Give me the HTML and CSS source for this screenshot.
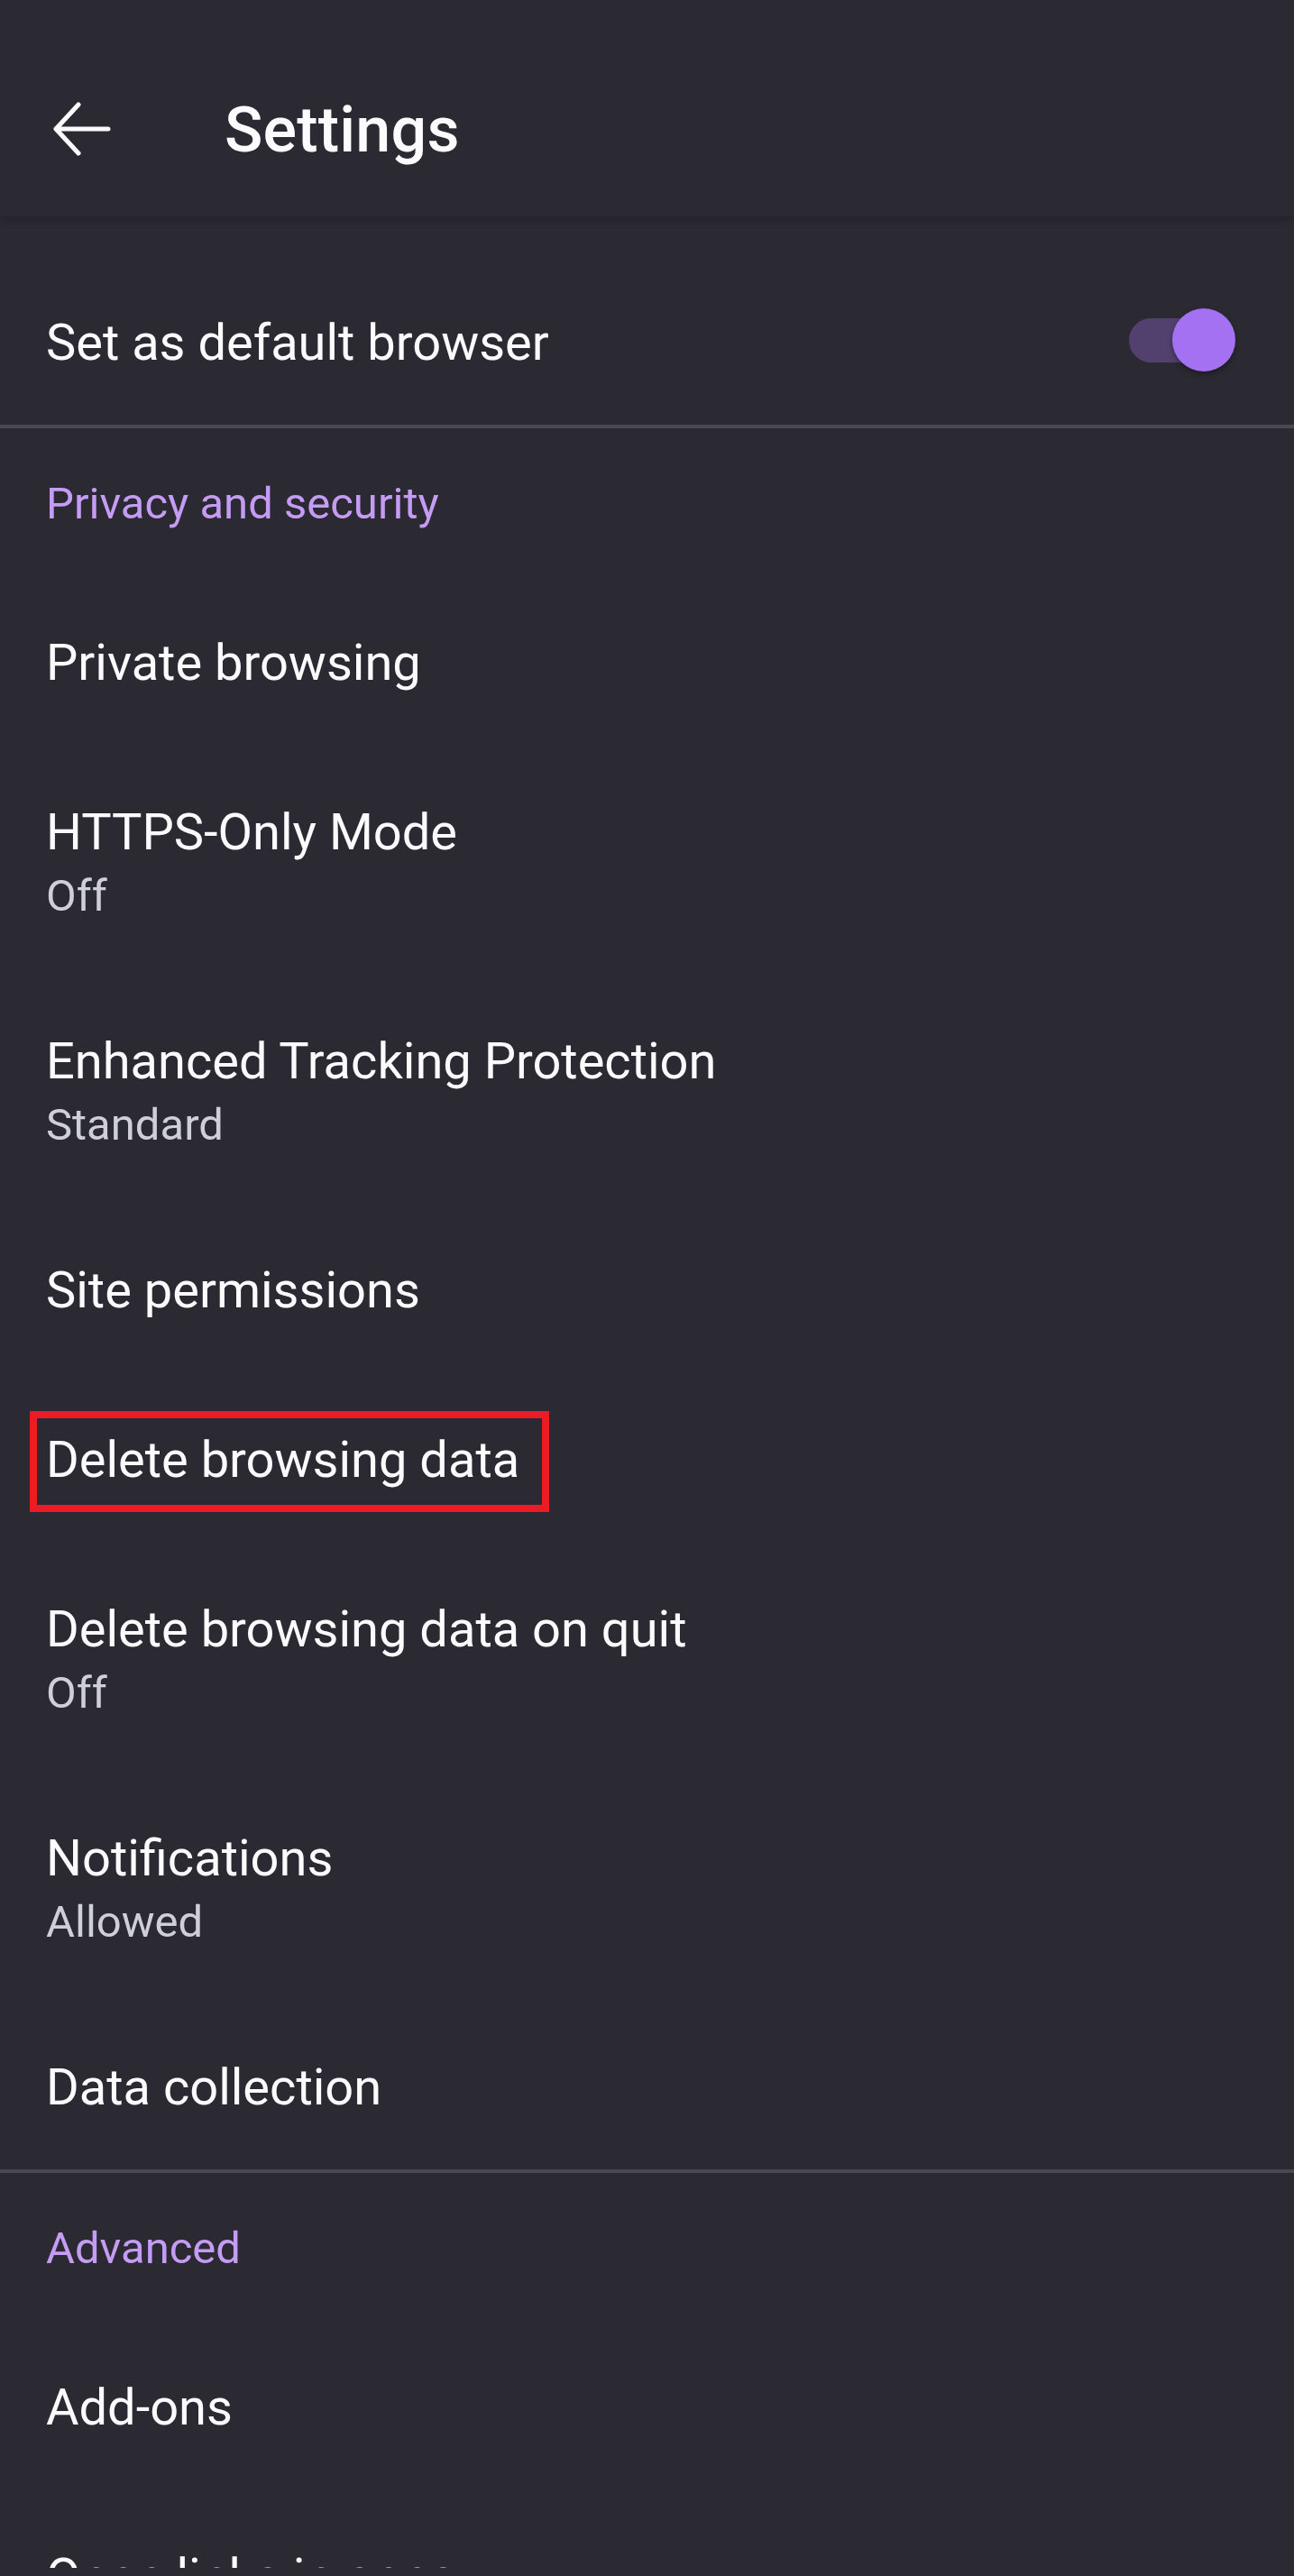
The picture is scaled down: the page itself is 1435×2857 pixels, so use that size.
FILE: index.html
```html
<!DOCTYPE html>
<html lang="en">
<head>
<meta charset="utf-8">
<title>Settings</title>
<link rel="stylesheet" href="styles.css">
</head>
<body>
<div class="screen">
  <header class="toolbar">
    <svg class="back" width="66" height="60" viewBox="0 0 66 60" aria-hidden="true">
      <path d="M4 30 H62 M29 3 L4 30 L29 57" fill="none" stroke="#fbfbfe" stroke-width="5" stroke-linecap="round" stroke-linejoin="round"/>
    </svg>
    <h1 class="title">Settings</h1>
  </header>

  <main class="list">
    <div class="pref pref-switch">
      <div class="pref-text"><div class="pref-title">Set as default browser</div></div>
      <div class="switch"><span class="track"></span><span class="thumb"></span></div>
    </div>
    <div class="divider"></div>

    <div class="category">Privacy and security</div>
    <div class="pref"><div class="pref-text"><div class="pref-title">Private browsing</div></div></div>
    <div class="pref"><div class="pref-text"><div class="pref-title">HTTPS-Only Mode</div><div class="pref-summary">Off</div></div></div>
    <div class="pref"><div class="pref-text"><div class="pref-title">Enhanced Tracking Protection</div><div class="pref-summary">Standard</div></div></div>
    <div class="pref"><div class="pref-text"><div class="pref-title">Site permissions</div></div></div>
    <div class="pref highlighted">
      <div class="pref-text"><div class="pref-title">Delete browsing data</div></div>
      <span class="mark"></span>
    </div>
    <div class="pref"><div class="pref-text"><div class="pref-title">Delete browsing data on quit</div><div class="pref-summary">Off</div></div></div>
    <div class="pref"><div class="pref-text"><div class="pref-title">Notifications</div><div class="pref-summary">Allowed</div></div></div>
    <div class="pref"><div class="pref-text"><div class="pref-title">Data collection</div></div></div>
    <div class="divider"></div>

    <div class="category">Advanced</div>
    <div class="pref"><div class="pref-text"><div class="pref-title">Add-ons</div></div></div>
    <div class="pref"><div class="pref-text"><div class="pref-title">Open links in apps</div></div></div>
  </main>
  <div class="navbar"></div>
</div>
</body>
</html>
```

FILE: styles.css
```css
html, body {
  margin: 0;
  padding: 0;
  background: #2b2a33;
}

.screen {
  position: relative;
  height: 2857px;
  overflow: hidden;
  background: #2b2a33;
  font-family: Roboto, "Noto Sans", "Liberation Sans", sans-serif;
  color: #fbfbfe;
}

.toolbar {
  position: relative;
  z-index: 2;
  height: 240px;
  box-sizing: border-box;
  padding-top: 46px;
  padding-left: 58px;
  display: flex;
  align-items: center;
  background: #2b2a33;
  box-shadow: 0 3px 10px rgba(0, 0, 0, 0.22);
}

.back {
  display: block;
  flex: none;
}

.title {
  margin: 2px 0 0 125px;
  font-size: 70px;
  font-weight: 500;
  line-height: 82px;
  color: #fbfbfe;
  letter-spacing: 0.2px;
}

.list {
  padding-top: 43px;
}

.pref {
  position: relative;
  display: flex;
  align-items: center;
  padding: 59px 48px 53px 51px;
}

.pref-text {
  flex: 1;
  min-width: 0;
}

.pref-title {
  font-size: 56px;
  line-height: 76px;
  color: #fbfbfe;
  white-space: nowrap;
}

.pref-summary {
  font-size: 49px;
  line-height: 66px;
  color: #cfcfd8;
}

.category {
  padding: 58px 48px 54px 51px;
  font-size: 49px;
  line-height: 51px;
  color: #c59cf3;
}

.divider {
  height: 4px;
  background: #4a4951;
}

.pref-switch .switch {
  margin-top: -6px;
}

.switch {
  position: relative;
  width: 118px;
  height: 76px;
  margin-right: 17px;
  display: flex;
  align-items: center;
}

.switch .track {
  display: block;
  width: 106px;
  height: 49px;
  border-radius: 25px;
  background: #52416f;
}

.switch .thumb {
  position: absolute;
  right: 0;
  top: 3px;
  width: 70px;
  height: 70px;
  border-radius: 50%;
  background: #a371f1;
  box-shadow: 0 3px 6px rgba(0, 0, 0, 0.35);
}

.mark {
  position: absolute;
  left: 33px;
  top: 43px;
  width: 576px;
  height: 112px;
  box-sizing: border-box;
  border: 8px solid #ed1c24;
}

.navbar {
  position: absolute;
  left: 0;
  right: 0;
  bottom: 0;
  height: 9px;
  background: #2b2a33;
}
```
